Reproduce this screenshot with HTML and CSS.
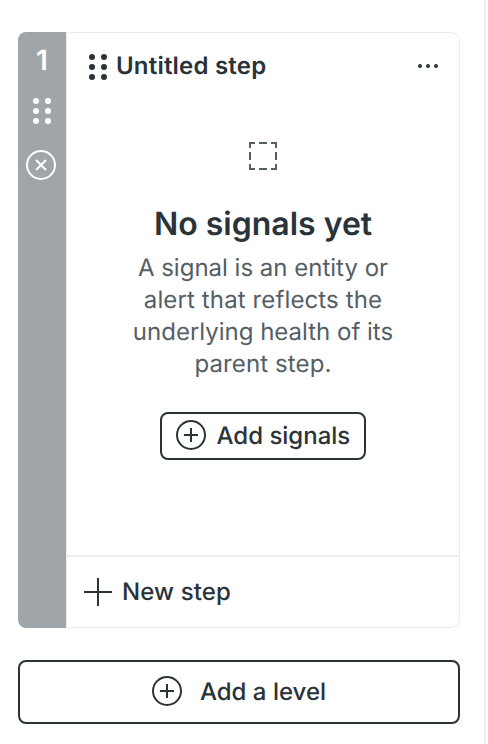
FILE: index.html
```html
<!DOCTYPE html>
<html lang="en">
<head>
<meta charset="utf-8">
<title>Levels</title>
<link rel="stylesheet" href="styles.css">
</head>
<body>
<main class="panel">
  <section class="level">
    <aside class="rail">
      <span class="rail-number">1</span>
      <svg class="rail-grip" width="18" height="26" viewBox="0 0 18 26" fill="currentColor"><circle cx="3" cy="3" r="3"/><circle cx="15" cy="3" r="3"/><circle cx="3" cy="13" r="3"/><circle cx="15" cy="13" r="3"/><circle cx="3" cy="23" r="3"/><circle cx="15" cy="23" r="3"/></svg>
      <svg class="rail-remove" width="30" height="30" viewBox="0 0 30 30" fill="none" stroke="currentColor" stroke-width="2"><circle cx="15" cy="15" r="14"/><path d="M10 10l10 10M20 10L10 20"/></svg>
    </aside>
    <div class="steps">
      <header class="step-header">
        <svg class="step-grip" width="18" height="26" viewBox="0 0 18 26" fill="currentColor"><circle cx="3" cy="3" r="3"/><circle cx="15" cy="3" r="3"/><circle cx="3" cy="13" r="3"/><circle cx="15" cy="13" r="3"/><circle cx="3" cy="23" r="3"/><circle cx="15" cy="23" r="3"/></svg>
        <h2 class="step-title">Untitled step</h2>
        <svg class="step-more" width="20" height="4" viewBox="0 0 20 4" fill="currentColor"><circle cx="2" cy="2" r="2"/><circle cx="10" cy="2" r="2"/><circle cx="18" cy="2" r="2"/></svg>
      </header>
      <div class="empty">
        <svg class="empty-icon" width="28" height="28" viewBox="0 0 28 28" fill="none" stroke="currentColor" stroke-width="2"><path d="M1 6V1H6M10 1H18M22 1H27V6M27 10V18M27 22V27H22M18 27H10M6 27H1V22M1 18V10"/></svg>
        <h3 class="empty-title">No signals yet</h3>
        <p class="empty-text">A signal is an entity or<br><span class="spaced">alert that reflects the</span><br>underlying health of its<br><span class="spaced">parent step.</span></p>
        <button class="button add-signals">
          <svg width="30" height="30" viewBox="0 0 30 30" fill="none" stroke="currentColor" stroke-width="2"><circle cx="15" cy="15" r="14"/><path d="M8 15H22M15 8V22"/></svg>
          <span class="button-label">Add signals</span>
        </button>
      </div>
      <footer class="new-step">
        <svg width="28" height="28" viewBox="0 0 28 28" fill="none" stroke="currentColor" stroke-width="2"><path d="M0 14H28M14 0V28"/></svg>
        <span class="spaced">New step</span>
      </footer>
    </div>
  </section>
  <button class="button add-level">
    <svg width="30" height="30" viewBox="0 0 30 30" fill="none" stroke="currentColor" stroke-width="2"><circle cx="15" cy="15" r="14"/><path d="M8 15H22M15 8V22"/></svg>
    <span class="button-label">Add a level</span>
  </button>
</main>
</body>
</html>
```
FILE: styles.css
```css
* { box-sizing: border-box; }

body {
  margin: 0;
  background: #fff;
  color: #293338;
  font-family: Inter, "Liberation Sans", sans-serif;
  font-size: 24px;
  line-height: 32px;
  text-rendering: geometricPrecision;
}

h2, h3, p { margin: 0; }
svg { display: block; flex: none; }

.panel {
  width: 486px;
  height: 744px;
  padding: 32px 24px 0 18px;
  border-right: 2px solid #ebecec;
}

.level {
  display: flex;
  height: 596px;
  border-radius: 8px;
  overflow: hidden;
}

.rail {
  display: flex;
  flex-direction: column;
  align-items: center;
  width: 48px;
  background: #9fa5a8;
  color: #fff;
}

.rail-number {
  margin-top: 12px;
  font-size: 28px;
  font-weight: 600;
}

.rail-grip { margin-top: 22px; }
.rail-remove { margin: 26px 2px 0 0; }

.steps {
  display: flex;
  flex-direction: column;
  flex: 1;
  border: 1px solid #ebecec;
  border-radius: 0 8px 8px 0;
}

.step-header {
  display: flex;
  align-items: center;
  height: 66px;
  padding: 0 21px 0 22px;
}

.step-grip { margin-top: 2px; }

.step-title {
  flex: 1;
  margin-left: 9px;
  font-size: 24px;
  font-weight: 600;
  letter-spacing: 0.2px;
}

.empty {
  display: flex;
  flex: 1;
  flex-direction: column;
  align-items: center;
  padding-top: 43px;
}

.empty-icon { color: #535e65; }

.empty-title {
  margin-top: 34px;
  font-size: 32px;
  line-height: 40px;
  font-weight: 600;
}

.empty-text {
  margin-top: 8px;
  color: #535e65;
  text-align: center;
}

.spaced { letter-spacing: 0.12px; }

.button {
  display: flex;
  align-items: center;
  border: 2px solid #293338;
  border-radius: 8px;
  background: #fff;
  color: inherit;
  font: inherit;
  font-weight: 500;
  text-rendering: inherit;
}

.button-label { padding-top: 2px; }

.add-signals {
  width: 206px;
  height: 48px;
  margin-top: 32px;
  padding: 0 0 2px 14px;
  gap: 10.5px;
  white-space: nowrap;
}

.new-step {
  display: flex;
  align-items: center;
  height: 72px;
  padding-left: 17px;
  gap: 10px;
  border-top: 2px solid #ebecec;
  font-weight: 500;
}

.add-level {
  justify-content: center;
  width: 442px;
  height: 64px;
  margin-top: 32px;
  padding: 0 0 2px;
  gap: 18px;
}
```
